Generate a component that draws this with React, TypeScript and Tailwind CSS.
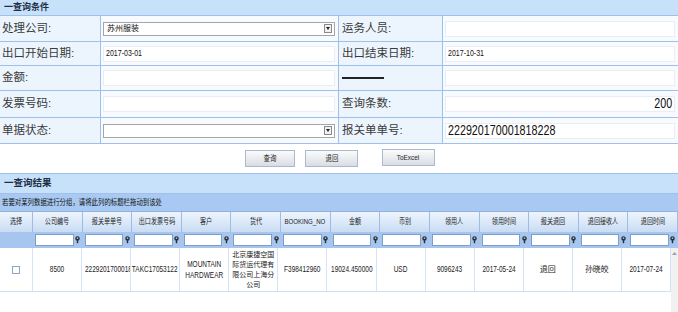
import React from 'react';

// 查询页面：上半部分是查询条件，下半部分是结果表格
const LINE = 'border-[#9ec0ea]';

// 原图文字比较窄，横向压缩一下
function Sq({ children, left }: { children: React.ReactNode; left?: boolean }) {
  return (
    <span className={`inline-block whitespace-nowrap scale-x-[0.72] ${left ? 'origin-left' : 'origin-center'}`}>
      {children}
    </span>
  );
}

function TextBox({ value, big, right }: { value?: string; big?: boolean; right?: boolean }) {
  return (
    <div
      className={`flex h-[16px] w-full items-center border border-[#e9eef4] bg-white px-[2px] text-[#111] ${
        right ? 'justify-end' : ''
      } ${big ? 'text-[14.5px]' : 'text-[9.5px]'}`}
    >
      {value && (
        <span className={`inline-block scale-x-[0.74] ${right ? 'origin-right' : 'origin-left'}`}>{value}</span>
      )}
    </div>
  );
}

function SelectBox({ value }: { value?: string }) {
  return (
    <div className="flex h-[14px] w-full items-center justify-between border border-[#a5a5a5] bg-white pl-[3px] pr-[2px]">
      <span className="text-[8px] text-[#111]">{value}</span>
      <span className="flex h-[9px] w-[8px] items-center justify-center border border-[#8a8a8a] bg-[#f0f0f0]">
        <svg width="4" height="3" viewBox="0 0 4 3">
          <path d="M0 0 L4 0 L2 3 Z" fill="#222" />
        </svg>
      </span>
    </div>
  );
}

type FormRow = { h: string; l1: string; v1: React.ReactNode; l2: React.ReactNode; v2: React.ReactNode };

const formRows: FormRow[] = [
  { h: 'h-[26px]', l1: '处理公司:', v1: <SelectBox value="苏州服装" />, l2: '运务人员:', v2: <TextBox /> },
  { h: 'h-[24px]', l1: '出口开始日期:', v1: <TextBox value="2017-03-01" />, l2: '出口结束日期:', v2: <TextBox value="2017-10-31" /> },
  {
    h: 'h-[25px]',
    l1: '金额:',
    v1: <TextBox />,
    l2: <div className="h-[2px] w-[42px] bg-[#222]" />,
    v2: <TextBox />,
  },
  { h: 'h-[27px]', l1: '发票号码:', v1: <TextBox />, l2: '查询条数:', v2: <TextBox value="200" big right /> },
  { h: 'h-[26px]', l1: '单据状态:', v1: <SelectBox />, l2: '报关单单号:', v2: <TextBox value="222920170001818228" big /> },
];

const columns = [
  '选择', '公司编号', '报关单单号', '出口发票号码', '客户', '货代', 'BOOKING_NO',
  '金额', '币别', '领用人', '领用时间', '报关退回', '退回接收人', '退回时间',
];

const dataRow: React.ReactNode[] = [
  null,
  <Sq>8500</Sq>,
  <Sq left>222920170001818228</Sq>,
  <Sq>TAKC17053122</Sq>,
  <span className="inline-block scale-x-[0.72] text-center leading-[11px]">MOUNTAIN<br />HARDWEAR</span>,
  <span className="block w-[44px] whitespace-normal break-all text-[7px] leading-[10px]">北京康捷空国际货运代理有限公司上海分公司</span>,
  <Sq>F398412960</Sq>,
  <Sq>19024.450000</Sq>,
  <Sq>USD</Sq>,
  <Sq>9096243</Sq>,
  <Sq>2017-05-24</Sq>,
  <span className="text-[8px]">退回</span>,
  <span className="text-[8px]">孙晓皎</span>,
  <Sq>2017-07-24</Sq>,
];

function FilterIcon() {
  return (
    <svg width="5" height="8" viewBox="0 0 5 8">
      <circle cx="2.5" cy="2.5" r="2.2" fill="#2c2c2c" />
      <circle cx="2.5" cy="2.2" r="0.9" fill="#9bbbe3" />
      <rect x="1.8" y="4.2" width="1.4" height="3" fill="#2c2c2c" />
    </svg>
  );
}

function Button({ label, w, up }: { label: string; w: string; up?: boolean }) {
  return (
    <div
      className={`flex h-[17px] ${w} items-center justify-center border border-[#a9bad0] bg-gradient-to-b from-[#fbfbfb] to-[#d9dde3] text-[8px] text-[#222] ${
        up ? '-mt-[1px]' : ''
      }`}
    >
      <span className="inline-block scale-x-[0.8]">{label}</span>
    </div>
  );
}

export default function App() {
  return (
    <div className="h-[312px] w-[678px] overflow-hidden bg-white font-['Liberation_Sans','Noto_Sans_CJK_SC',sans-serif] text-[#333]">
      {/* 查询条件 */}
      <div className={`flex h-[16px] items-center border-b ${LINE} bg-[#c8e1fb] pl-[4px] text-[9px] font-bold text-[#1d2f45]`}>
        一查询条件
      </div>

      <div className="grid grid-cols-[101px_238px_104px_235px]">
        {formRows.map((r, i) => (
          <React.Fragment key={i}>
            <div className={`flex ${r.h} items-center border-b border-r ${LINE} bg-[#ecf5fe] pl-[2px] text-[11.5px] text-[#3a3a3a]`}>
              {r.l1}
            </div>
            <div className={`flex ${r.h} items-center border-b border-r ${LINE} bg-[#f7fbff] pl-[2px] pr-[3px]`}>{r.v1}</div>
            <div className={`flex ${r.h} items-center border-b border-r ${LINE} bg-[#ecf5fe] pl-[3px] text-[11.5px] text-[#3a3a3a]`}>
              {r.l2}
            </div>
            <div className={`flex ${r.h} items-center border-b ${LINE} bg-[#f7fbff] pl-[2px] pr-[3px]`}>{r.v2}</div>
          </React.Fragment>
        ))}
      </div>

      <div className="flex h-[29px] items-start justify-center gap-[10px] pt-[6px] pl-[2px]">
        <Button label="查询" w="w-[50px]" />
        <Button label="退回" w="w-[53px]" />
        <div className="w-[4px]" />
        <Button label="ToExcel" w="w-[53px]" up />
      </div>

      {/* 查询结果 */}
      <div className={`flex h-[21px] items-center border-y ${LINE} bg-[#c8e1fb] pl-[4px] text-[9.5px] font-bold text-[#1d2f45]`}>
        一查询结果
      </div>
      <div className="flex h-[17px] items-center bg-[#a9c9f2] pl-[2px] text-[8px] text-[#111]">
        <span className="inline-block origin-left scale-x-[0.8] whitespace-nowrap">
          若要对某列数据进行分组，请将此列的标题栏拖动到该处
        </span>
      </div>

      <div className="grid h-[21px] grid-cols-[33px_repeat(13,1fr)] border-t border-[#8fb3e2]">
        {columns.map((c) => (
          <div
            key={c}
            className="flex items-center justify-center overflow-hidden border-r border-[#9fbde4] bg-gradient-to-b from-[#eef5fd] to-[#c9dcf4] text-[8px] text-[#222]"
          >
            <span className="inline-block scale-x-[0.76] whitespace-nowrap">{c}</span>
          </div>
        ))}
      </div>

      <div className="grid h-[16px] grid-cols-[33px_repeat(13,1fr)] bg-[#a6c6f0]">
        {columns.map((c, i) => (
          <div key={c} className="flex items-center pl-[2px] pr-[1px]">
            {i > 0 && (
              <>
                <div className="h-[12px] flex-1 border border-[#7f9fcb] bg-white" />
                <div className="flex w-[8px] justify-center">
                  <FilterIcon />
                </div>
              </>
            )}
          </div>
        ))}
      </div>

      <div className="flex">
        <div className="flex-1">
          <div className="grid h-[44px] grid-cols-[33px_repeat(13,1fr)] border-b border-[#cddff5]">
            {dataRow.map((d, i) => (
              <div
                key={i}
                className={`flex items-center overflow-hidden whitespace-nowrap border-r border-[#d4e3f7] text-center text-[9px] text-[#222] ${
                  i === 2 ? 'justify-start pl-[3px]' : 'justify-center'
                }`}
              >
                {i === 0 ? <div className="h-[8px] w-[8px] border border-[#8ea6c4] bg-white" /> : d}
              </div>
            ))}
          </div>
        </div>
        <div className="flex h-[64px] w-[7px] justify-center bg-[#f1f1f1] pt-[4px]">
          <svg width="5" height="3" viewBox="0 0 5 3">
            <path d="M0 3 L2.5 0 L5 3 Z" fill="#a0a0a0" />
          </svg>
        </div>
      </div>
    </div>
  );
}
